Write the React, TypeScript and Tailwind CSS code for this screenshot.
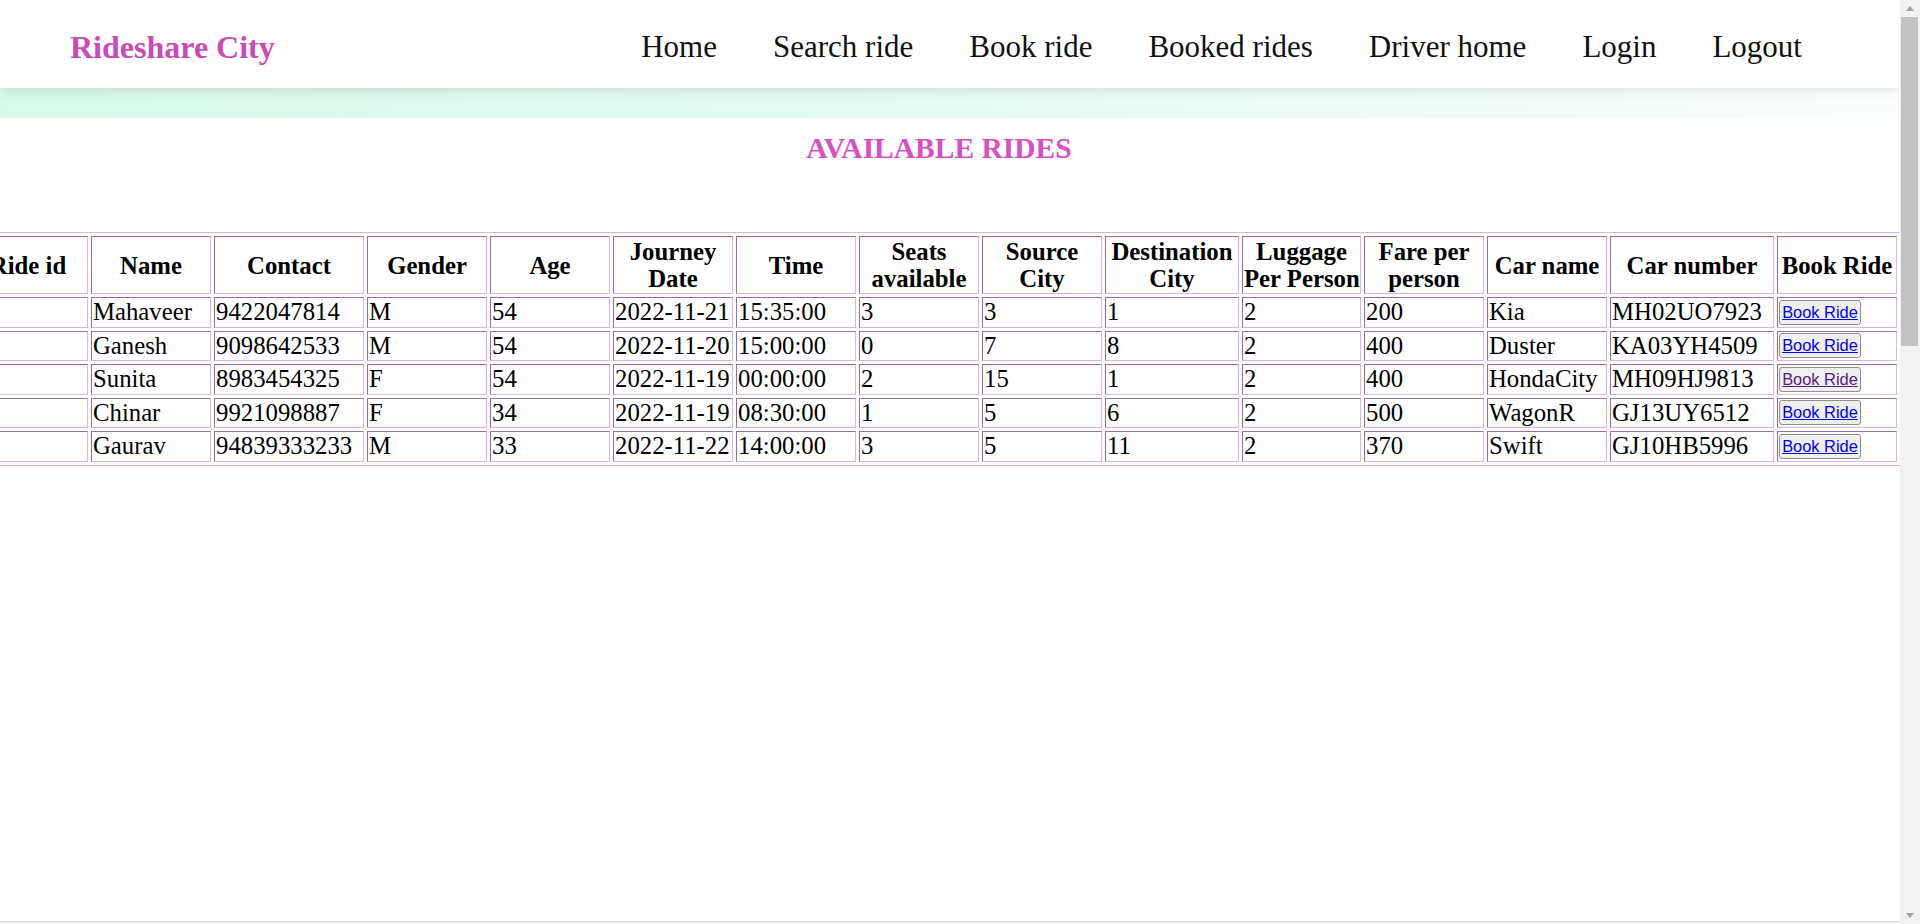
import React from "react";

type Col = { lines: string[]; w: string };

const cols: Col[] = [
  { lines: ["Ride id"], w: "w-[120px]" },
  { lines: ["Name"], w: "w-[120px]" },
  { lines: ["Contact"], w: "w-[150px]" },
  { lines: ["Gender"], w: "w-[120px]" },
  { lines: ["Age"], w: "w-[120px]" },
  { lines: ["Journey", "Date"], w: "w-[120px]" },
  { lines: ["Time"], w: "w-[120px]" },
  { lines: ["Seats", "available"], w: "w-[120px]" },
  { lines: ["Source", "City"], w: "w-[120px]" },
  { lines: ["Destination", "City"], w: "w-[134px]" },
  { lines: ["Luggage", "Per Person"], w: "w-[119px]" },
  { lines: ["Fare per", "person"], w: "w-[120px]" },
  { lines: ["Car name"], w: "w-[120px]" },
  { lines: ["Car number"], w: "w-[164px]" },
  { lines: ["Book Ride"], w: "w-[120px]" },
];

const rows: { cells: string[]; visited?: boolean }[] = [
  { cells: ["", "Mahaveer", "9422047814", "M", "54", "2022-11-21", "15:35:00", "3", "3", "1", "2", "200", "Kia", "MH02UO7923"] },
  { cells: ["", "Ganesh", "9098642533", "M", "54", "2022-11-20", "15:00:00", "0", "7", "8", "2", "400", "Duster", "KA03YH4509"] },
  { cells: ["", "Sunita", "8983454325", "F", "54", "2022-11-19", "00:00:00", "2", "15", "1", "2", "400", "HondaCity", "MH09HJ9813"], visited: true },
  { cells: ["", "Chinar", "9921098887", "F", "34", "2022-11-19", "08:30:00", "1", "5", "6", "2", "500", "WagonR", "GJ13UY6512"] },
  { cells: ["", "Gaurav", "94839333233", "M", "33", "2022-11-22", "14:00:00", "3", "5", "11", "2", "370", "Swift", "GJ10HB5996"] },
];

const navItems = ["Home", "Search ride", "Book ride", "Booked rides", "Driver home", "Login", "Logout"];

const cellBorder =
  "border border-t-[#94709c] border-l-[#94709c] border-b-[#dab3e4] border-r-[#dab3e4]";

export default function App() {
  return (
    <div className="flex h-[924px] w-[1920px] overflow-hidden bg-white font-['Liberation_Serif',serif] text-black">
      <div className="flex min-w-0 flex-1 flex-col overflow-hidden">
        <header className="relative z-10 flex h-[88px] shrink-0 items-center justify-between bg-white pl-[70px] pr-[98px] pt-[6px] shadow-[0_3px_10px_rgba(0,0,0,0.10)]">
          <div className="text-[32px] font-bold leading-[36px] text-[#c94bb6]">Rideshare City</div>
          <nav className="flex gap-[56px] text-[31px] leading-[36px] text-[#111]">
            {navItems.map((n) => (
              <span key={n} className="whitespace-nowrap">
                {n}
              </span>
            ))}
          </nav>
        </header>
        <div className="h-[30px] shrink-0 bg-gradient-to-r from-[#d8f8ea] via-[#e4faf1] to-[#fbfefd]" />
        <h2 className="mt-[14px] pr-[22px] text-center text-[29.5px] font-bold leading-[33px] text-[#d650c2]">
          AVAILABLE RIDES
        </h2>
        <div className="ml-[-36px] mt-[67px]">
          <table className="w-[1937px] table-fixed border-separate border-spacing-x-[3px] border-spacing-y-[3px] border border-[#d8b0e2] text-[24.75px]">
            <thead>
              <tr>
                {cols.map((c, i) => (
                  <th
                    key={i}
                    className={`${c.w} ${cellBorder} h-[58px] p-[1px] text-center align-middle font-bold leading-[27px] whitespace-nowrap`}
                  >
                    {c.lines.map((l, j) => (
                      <div key={j}>{l}</div>
                    ))}
                  </th>
                ))}
              </tr>
            </thead>
            <tbody>
              {rows.map((r, i) => (
                <tr key={i}>
                  {r.cells.map((c, j) => (
                    <td
                      key={j}
                      className={`${cellBorder} h-[30.5px] p-[1px] text-left align-middle leading-[26.5px] whitespace-nowrap`}
                    >
                      {c}
                    </td>
                  ))}
                  <td className={`${cellBorder} h-[30.5px] p-[1px] align-middle leading-[26.5px]`}>
                    <button className="block h-[25px] w-[82px] rounded-[3px] border border-[#8f8f8f] bg-[#efefef] px-0 text-center font-['Liberation_Sans',Arial,sans-serif] text-[16.4px] leading-[21px]">
                      <span className={`underline ${r.visited ? "text-[#551a8b]" : "text-[#0000ee]"}`}>Book Ride</span>
                    </button>
                  </td>
                </tr>
              ))}
            </tbody>
          </table>
        </div>
        <div className="flex-1" />
        <div className="h-[3px] shrink-0 border-t border-[#dcdcdc] bg-[#f1f1f1]" />
      </div>
      <div className="flex w-[20px] shrink-0 flex-col bg-[#f1f1f1]">
        <div className="flex h-[17px] items-center justify-center">
          <svg width="8" height="5" viewBox="0 0 8 5">
            <polygon points="4,0 8,5 0,5" fill="#a3a3a3" />
          </svg>
        </div>
        <div className="ml-[1px] mr-[2px] h-[329px] bg-[#c1c1c1]" />
        <div className="flex-1" />
        <div className="flex h-[17px] items-center justify-center">
          <svg width="8" height="5" viewBox="0 0 8 5">
            <polygon points="0,0 8,0 4,5" fill="#a3a3a3" />
          </svg>
        </div>
      </div>
    </div>
  );
}
